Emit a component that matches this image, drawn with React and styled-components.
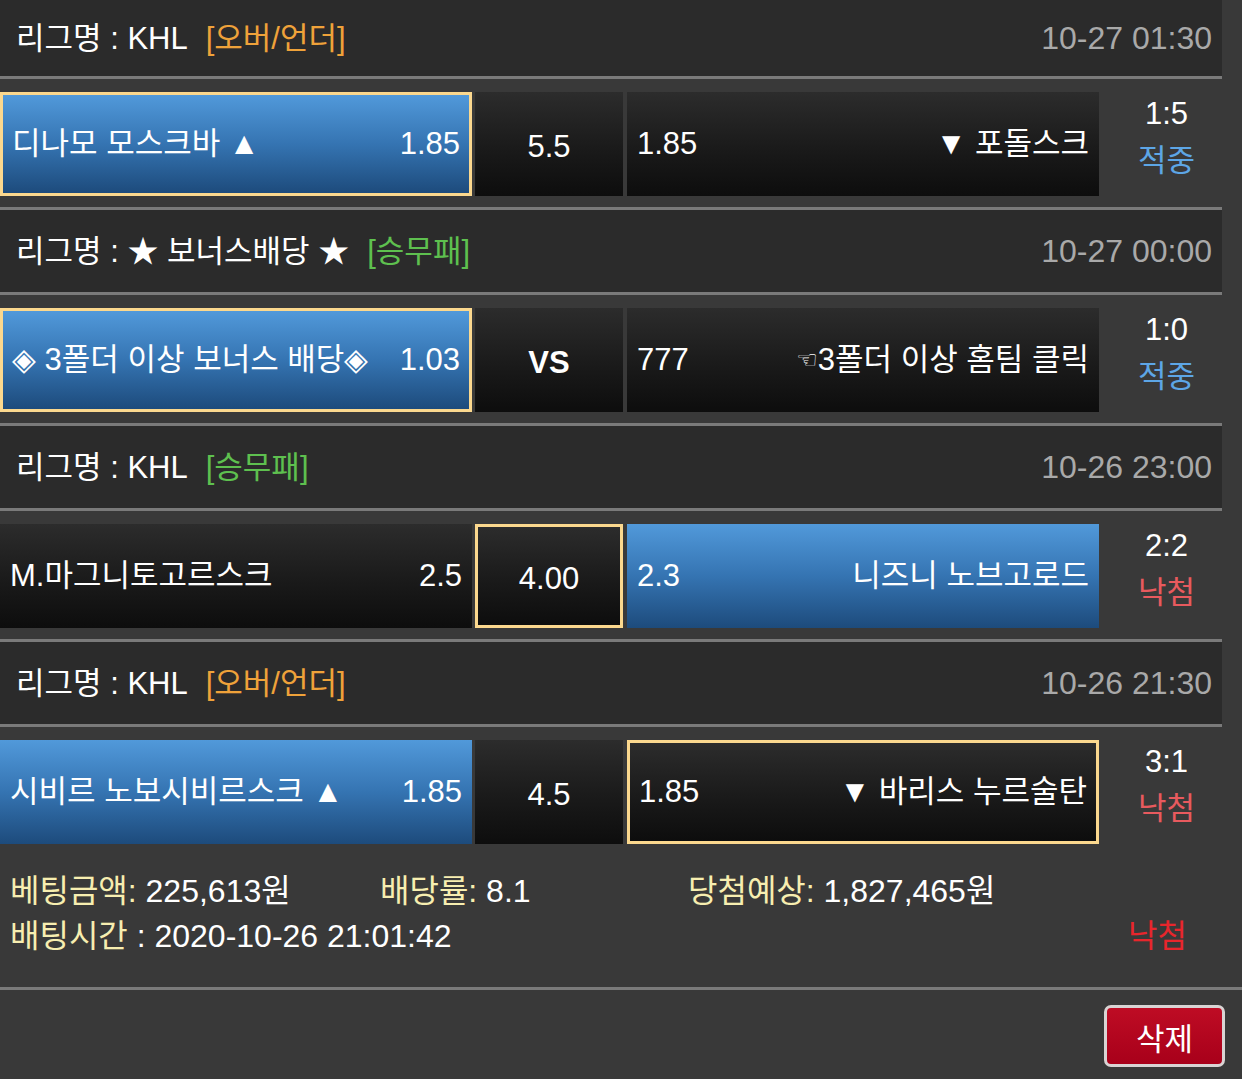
import styled, { createGlobalStyle, css } from 'styled-components';

const GlobalStyle = createGlobalStyle`
    html, body {
        margin: 0;
        padding: 0;
        background: #393939;
    }
    body {
        font-family: 'Liberation Sans', 'Noto Sans CJK KR', sans-serif;
        color: #fff;
    }
`;

const Page = styled.div`
    width: 1242px;
    min-height: 1079px;
    background: #393939;
    font-size: 31px;
    line-height: 1.2;
`;

const Block = styled.div`
    width: 1222px;
`;

const LeagueHeader = styled.div`
    height: ${(p) => (p.$cut ? '76px' : '82px')};
    display: flex;
    align-items: center;
    justify-content: space-between;
    padding: 0 10px 0 16px;
    background: #2b2b2b;
    border-bottom: 3px solid #7a7a7a;
`;

const LeagueName = styled.div`
    white-space: nowrap;
    padding-top: 2px;
`;

const Tag = styled.span`
    margin-left: 18px;
    color: ${(p) => (p.$kind === 'ou' ? '#efa23a' : '#5ec04f')};
`;

const Time = styled.div`
    color: #a9a9a9;
    font-size: 32px;
`;

const MatchRow = styled.div`
    display: flex;
    align-items: center;
    padding: 13px 0 11px;
    border-bottom: ${(p) => (p.$last ? 'none' : '3px solid #7a7a7a')};
`;

const cellBase = css`
    box-sizing: border-box;
    height: 104px;
    display: flex;
    align-items: center;
    justify-content: space-between;
    white-space: nowrap;
    background: ${(p) =>
        p.$blue
            ? 'linear-gradient(to bottom, #5199da 0%, #3574b2 50%, #1d4b7c 100%)'
            : 'linear-gradient(to bottom, #2c2c2c 0%, #1a1a1a 55%, #0d0d0d 100%)'};
    border: ${(p) => (p.$picked ? '3px solid #fbd88e' : 'none')};
    padding: ${(p) => (p.$picked ? '0 9px' : '0 10px')};
`;

const TeamCell = styled.div`
    ${cellBase};
    width: 472px;
`;

const MidCell = styled.div`
    ${cellBase};
    width: 148px;
    margin: 0 4px 0 3px;
    justify-content: center;
    padding-top: 6px;
    font-weight: ${(p) => (p.$bold ? 700 : 400)};
`;

const Result = styled.div`
    flex: 1;
    display: flex;
    flex-direction: column;
    align-items: center;
    padding: 0 0 14px 12px;
    gap: 10px;
`;

const Score = styled.div`
    color: #fff;
`;

const Status = styled.div`
    color: ${(p) => (p.$win ? '#5da6e6' : '#e85a5e')};
`;

const Pointer = styled.span`
    font-family: 'DejaVu Sans', sans-serif;
    font-size: 24px;
    vertical-align: 2px;
`;

const Summary = styled.div`
    padding: 14px 10px 28px;
    font-size: 32px;
    border-bottom: 3px solid #7a7a7a;
`;

const SummaryLine = styled.div`
    display: flex;
    align-items: center;
    height: 45px;
`;

const SummaryItem = styled.div`
    width: ${(p) => p.$w || 'auto'};
    white-space: nowrap;
`;

const Label = styled.span`
    color: #f7eeb0;
`;

const FinalStatus = styled.div`
    margin-left: auto;
    margin-right: 45px;
    color: #e8262c;
`;

const Footer = styled.div`
    display: flex;
    justify-content: flex-end;
    padding: 15px 17px 13px;
`;

const DeleteButton = styled.button`
    width: 121px;
    height: 62px;
    border: 3px solid #d9d4d4;
    border-radius: 7px;
    background: linear-gradient(to bottom, #be0c24 0%, #a8001a 100%);
    color: #fff;
    font-family: inherit;
    font-size: 31px;
    cursor: pointer;
`;

const matches = [
    {
        league: '리그명 : KHL',
        tag: '[오버/언더]',
        kind: 'ou',
        time: '10-27 01:30',
        home: '디나모 모스크바 ▲',
        homeOdds: '1.85',
        mid: '5.5',
        awayOdds: '1.85',
        away: '▼ 포돌스크',
        pick: 'home',
        score: '1:5',
        win: true,
    },
    {
        league: '리그명 : ★ 보너스배당 ★',
        tag: '[승무패]',
        kind: 'wdl',
        time: '10-27 00:00',
        home: '◈ 3폴더 이상 보너스 배당◈',
        homeOdds: '1.03',
        mid: 'VS',
        bold: true,
        awayOdds: '777',
        away: (
            <span>
                <Pointer>☜</Pointer>3폴더 이상 홈팀 클릭
            </span>
        ),
        pick: 'home',
        score: '1:0',
        win: true,
    },
    {
        league: '리그명 : KHL',
        tag: '[승무패]',
        kind: 'wdl',
        time: '10-26 23:00',
        home: 'M.마그니토고르스크',
        homeOdds: '2.5',
        mid: '4.00',
        awayOdds: '2.3',
        away: '니즈니 노브고로드',
        pick: 'mid',
        blue: 'away',
        score: '2:2',
        win: false,
    },
    {
        league: '리그명 : KHL',
        tag: '[오버/언더]',
        kind: 'ou',
        time: '10-26 21:30',
        home: '시비르 노보시비르스크 ▲',
        homeOdds: '1.85',
        mid: '4.5',
        awayOdds: '1.85',
        away: '▼ 바리스 누르술탄',
        pick: 'away',
        blue: 'home',
        score: '3:1',
        win: false,
    },
];

const App = () => {
    return (
        <Page>
            <GlobalStyle />
            {matches.map((m, i) => {
                const blue = m.blue || m.pick;
                return (
                    <Block key={i}>
                        <LeagueHeader $cut={i === 0}>
                            <LeagueName>
                                {m.league}
                                <Tag $kind={m.kind}>{m.tag}</Tag>
                            </LeagueName>
                            <Time>{m.time}</Time>
                        </LeagueHeader>
                        <MatchRow $last={i === matches.length - 1}>
                            <TeamCell $blue={blue === 'home'} $picked={m.pick === 'home'}>
                                <span>{m.home}</span>
                                <span>{m.homeOdds}</span>
                            </TeamCell>
                            <MidCell $picked={m.pick === 'mid'} $bold={m.bold}>
                                {m.mid}
                            </MidCell>
                            <TeamCell $blue={blue === 'away'} $picked={m.pick === 'away'}>
                                <span>{m.awayOdds}</span>
                                <span>{m.away}</span>
                            </TeamCell>
                            <Result>
                                <Score>{m.score}</Score>
                                <Status $win={m.win}>{m.win ? '적중' : '낙첨'}</Status>
                            </Result>
                        </MatchRow>
                    </Block>
                );
            })}
            <Summary>
                <SummaryLine>
                    <SummaryItem $w="370px">
                        <Label>베팅금액:</Label> 225,613원
                    </SummaryItem>
                    <SummaryItem $w="308px">
                        <Label>배당률:</Label> 8.1
                    </SummaryItem>
                    <SummaryItem>
                        <Label>당첨예상:</Label> 1,827,465원
                    </SummaryItem>
                </SummaryLine>
                <SummaryLine>
                    <SummaryItem>
                        <Label>배팅시간</Label> : 2020-10-26 21:01:42
                    </SummaryItem>
                    <FinalStatus>낙첨</FinalStatus>
                </SummaryLine>
            </Summary>
            <Footer>
                <DeleteButton>삭제</DeleteButton>
            </Footer>
        </Page>
    );
};

export default App;
